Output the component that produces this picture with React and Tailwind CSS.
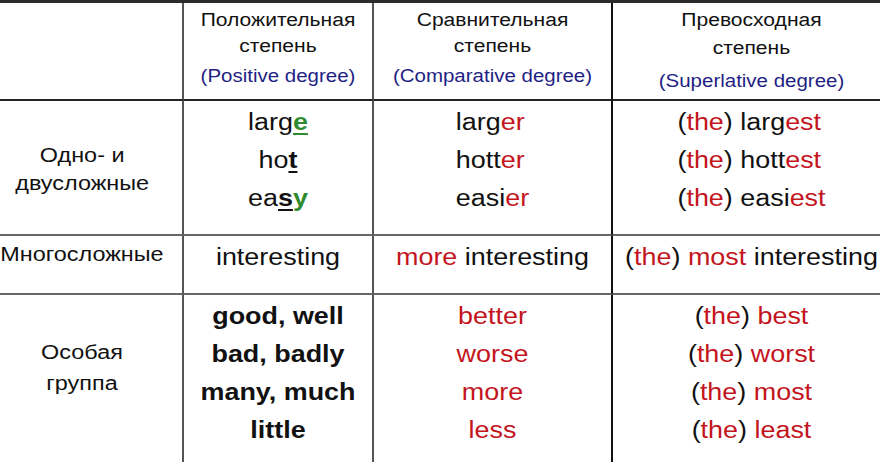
// Degrees of comparison table (Russian / English)
const RED = "text-[#c3151d]";

function R({ children }) {
  return <span className={RED}>{children}</span>;
}

// "(the)" with black brackets and red article
function The() {
  return (
    <>
      (<R>the</R>)
    </>
  );
}

function Head({ lines, en, last }) {
  return (
    <div
      className={`border-b-2 border-[#222] text-center text-[18px] ${
        last ? "pl-[10px] pt-[3px] leading-[28px]" : "border-r-2 border-r-[#555] pt-[4px] leading-[26px]"
      }`}
    >
      <div className="scale-x-[1.17]">
        {lines.map((l) => (
          <div key={l}>{l}</div>
        ))}
        <div className={`text-[#1f1f85] text-[17.5px] ${last ? "mt-[5px]" : "mt-[4px]"}`}>{en}</div>
      </div>
    </div>
  );
}

export default function App() {
  const u = "font-bold underline decoration-2 underline-offset-[3px]";
  const green = "text-[#2e8b2e]";
  const side = "border-r-2 border-r-[#555] pr-[18px] text-center text-[20px]";
  const mid = "border-r-2 border-r-[#555] pt-[2px] text-center text-[23px] leading-[38px]";
  const third = "border-r-2 border-r-[#111] pt-[2px] text-center text-[23px] leading-[38px]";
  const fourth = "pl-[10px] pt-[2px] text-center text-[23px] leading-[38px]";

  return (
    <div className="w-[880px] h-[462px] overflow-hidden bg-white border-t-[3px] border-[#2a2a2a] font-['Liberation_Sans',Arial,sans-serif] text-[#111]">
      <div className="grid grid-cols-[184px_190px_239px_1fr] grid-rows-[98px_135px_59px_167px]">
        {/* header */}
        <div className="border-r-2 border-r-[#555] border-b-2 border-b-[#222]" />
        <Head lines={["Положительная", "степень"]} en="(Positive degree)" />
        <div className="border-r-2 border-r-[#111] border-b-2 border-b-[#222] pt-[4px] text-center text-[18px] leading-[26px]">
          <div className="scale-x-[1.17]">
            <div>Сравнительная</div>
            <div>степень</div>
            <div className="mt-[4px] text-[17.5px] text-[#1f1f85]">(Comparative degree)</div>
          </div>
        </div>
        <Head lines={["Превосходная", "степень"]} en="(Superlative degree)" last />

        {/* one- and two-syllable */}
        <div className={`${side} border-b-2 border-b-[#666] flex items-center justify-center pt-[3px] leading-[28px]`}>
          <div className="scale-x-[1.17]">
            <div>Одно- и</div>
            <div>двусложные</div>
          </div>
        </div>
        <div className={`${mid} border-b-2 border-b-[#666]`}>
          <div className="scale-x-[1.17]">
            <div>
              larg<span className={`${u} ${green}`}>e</span>
            </div>
            <div>
              ho<span className={u}>t</span>
            </div>
            <div>
              ea<span className={u}>s</span>
              <span className={`font-bold ${green}`}>y</span>
            </div>
          </div>
        </div>
        <div className={`${third} border-b-2 border-b-[#666]`}>
          <div className="scale-x-[1.17]">
            <div className="inline-block text-left">
              <div>
                larg<R>er</R>
              </div>
              <div>
                hott<R>er</R>
              </div>
              <div>
                easi<R>er</R>
              </div>
            </div>
          </div>
        </div>
        <div className={`${fourth} border-b-2 border-b-[#666]`}>
          <div className="scale-x-[1.17]">
            <div className="inline-block text-left">
              <div>
                <The /> larg<R>est</R>
              </div>
              <div>
                <The /> hott<R>est</R>
              </div>
              <div>
                <The /> easi<R>est</R>
              </div>
            </div>
          </div>
        </div>

        {/* multi-syllable */}
        <div className={`${side} border-b-2 border-b-[#666] pt-[2px] leading-[32px]`}>
          <div className="scale-x-[1.17]">Многосложные</div>
        </div>
        <div className={`${mid} border-b-2 border-b-[#666]`}>
          <div className="scale-x-[1.17]">interesting</div>
        </div>
        <div className={`${third} border-b-2 border-b-[#666]`}>
          <div className="scale-x-[1.17]">
            <R>more</R> interesting
          </div>
        </div>
        <div className={`${fourth} border-b-2 border-b-[#666] whitespace-nowrap`}>
          <div className="scale-x-[1.17]">
            <The /> <R>most</R> interesting
          </div>
        </div>

        {/* special group */}
        <div className={`${side} pt-[42px] leading-[31px]`}>
          <div className="scale-x-[1.17]">
            <div>Особая</div>
            <div>группа</div>
          </div>
        </div>
        <div className={`${mid} font-bold`}>
          <div className="scale-x-[1.17]">
            <div>good, well</div>
            <div>bad, badly</div>
            <div>many, much</div>
            <div>little</div>
          </div>
        </div>
        <div className={`${third} ${RED}`}>
          <div className="scale-x-[1.17]">
            <div>better</div>
            <div>worse</div>
            <div>more</div>
            <div>less</div>
          </div>
        </div>
        <div className={fourth}>
          <div className="scale-x-[1.17]">
            <div>
              <The /> <R>best</R>
            </div>
            <div>
              <The /> <R>worst</R>
            </div>
            <div>
              <The /> <R>most</R>
            </div>
            <div>
              <The /> <R>least</R>
            </div>
          </div>
        </div>
      </div>
    </div>
  );
}
